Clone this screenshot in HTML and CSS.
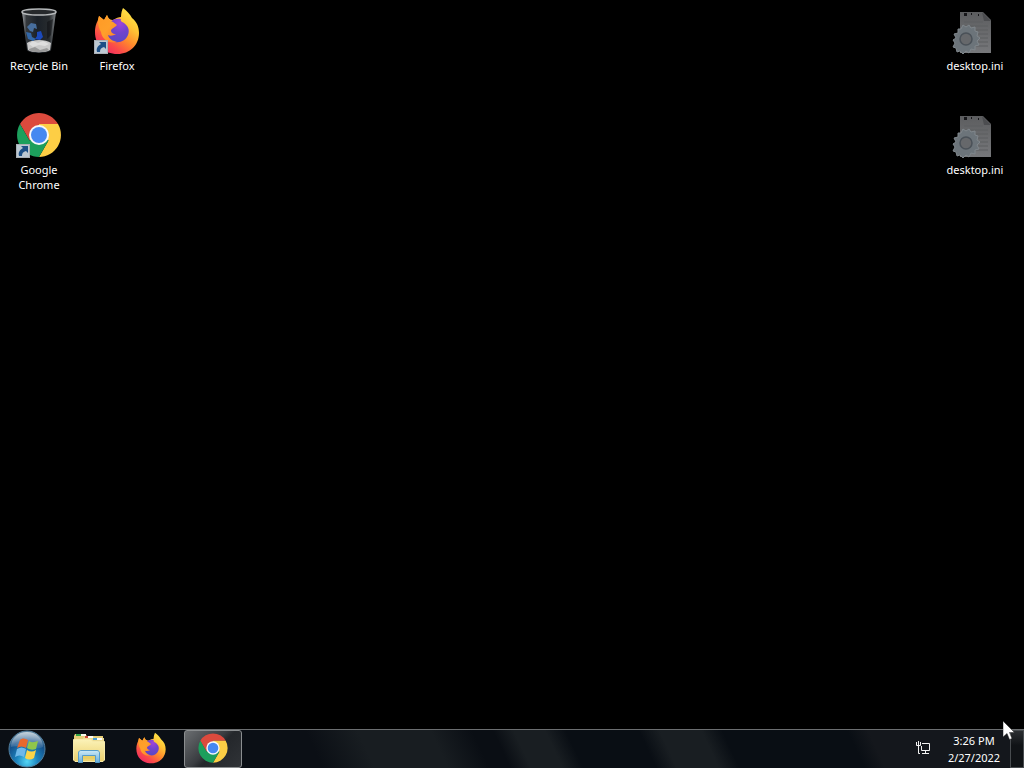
FILE: index.html
```
<!DOCTYPE html>
<html lang="en">
<head>
<meta charset="utf-8">
<title>Desktop</title>
<link rel="stylesheet" href="styles.css">
</head>
<body>
<svg class="defs" aria-hidden="true">
  <defs>
    <linearGradient id="fx-body" x1="0.85" y1="0.05" x2="0.2" y2="0.95">
      <stop offset="0" stop-color="#ffe94a"/><stop offset=".3" stop-color="#ffc234"/><stop offset=".55" stop-color="#ff8a2c"/><stop offset=".8" stop-color="#fb4a4a"/><stop offset="1" stop-color="#f02a62"/>
    </linearGradient>
    <linearGradient id="fx-head" x1="0" y1="0" x2="1" y2="1">
      <stop offset="0" stop-color="#ff9a26"/><stop offset=".5" stop-color="#ffa02a"/><stop offset="1" stop-color="#ff7a2e"/>
    </linearGradient>
    <radialGradient id="fx-globe" cx=".6" cy=".2" r=".8">
      <stop offset="0" stop-color="#a044d8"/><stop offset=".5" stop-color="#7043cc"/><stop offset="1" stop-color="#5a48c4"/>
    </radialGradient>
    <linearGradient id="bin-glass" x1="0" x2="1" y1="0" y2="0">
      <stop offset="0" stop-color="#a4a8ac"/><stop offset=".13" stop-color="#34383c"/><stop offset=".45" stop-color="#1b2128"/><stop offset=".8" stop-color="#272b2e"/><stop offset="1" stop-color="#85898c"/>
    </linearGradient>
    <radialGradient id="orb" cx=".5" cy=".85" r=".85">
      <stop offset="0" stop-color="#54d6f5"/><stop offset=".35" stop-color="#1c83bd"/><stop offset=".7" stop-color="#14508a"/><stop offset="1" stop-color="#63879e"/>
    </radialGradient>
    <linearGradient id="orb-shine" x1="0" y1="0" x2="0" y2="1">
      <stop offset="0" stop-color="#fff" stop-opacity=".65"/><stop offset="1" stop-color="#fff" stop-opacity=".08"/>
    </linearGradient>
    <linearGradient id="folder" x1="0" y1="0" x2="0" y2="1">
      <stop offset="0" stop-color="#fbf2b8"/><stop offset="1" stop-color="#ecd06c"/>
    </linearGradient>
    <linearGradient id="stand" x1="0" y1="0" x2="0" y2="1">
      <stop offset="0" stop-color="#cdeaf6"/><stop offset="1" stop-color="#67aedc"/>
    </linearGradient>
    <linearGradient id="page" x1="0" y1="0" x2="0" y2="1">
      <stop offset="0" stop-color="#5c5d5f"/><stop offset="1" stop-color="#77787b"/>
    </linearGradient>

    <symbol id="firefox" viewBox="0 0 48 48">
      <path fill="url(#fx-body)" d="M30 1C34 4 37 7 39 11C44 15 46 20 46 26C46 38 37 47 24.500 47C11 47 2 38 2 25C2 19 4 15 5 13L6 9L11 13L14 8C15 11 17 13 20 13C23 11 26 10 28 10C28 6 29 3 30 1Z"/>
      <path fill="url(#fx-globe)" d="M17 15C20 12 24 11 28 12C27 14 29 15 31 16C35 19 37 23 35 28C33 33 28 36 22 35C16 34 13 29 14 23C14 19 15 17 17 15Z"/>
      <path fill="url(#fx-head)" d="M5 13L6 9L11 13L14 8C15 12 17 14 20 15L24 18C23 20 19 21 18 23C18 25 19 27 23 27C20 29 17 29 15 28C16 32 20 34 24 35C16 37 9 32 8 25C6 22 5 18 5 13Z"/>
    </symbol>

    <symbol id="chrome" viewBox="0 0 48 48">
      <path fill="#dc4a3d" d="M5 13A22 22 0 0 1 43 13H24V24L14.500 29.500Z"/>
      <path fill="#fdce45" d="M43 13A22 22 0 0 1 24 46L33.500 29.500L24 24V13Z"/>
      <path fill="#1c9f5c" d="M5 13A22 22 0 0 0 24 46L33.500 29.500L24 24L14.500 29.500Z"/>
      <circle cx="24" cy="24" r="10" fill="#f6f8fa"/>
      <circle cx="24" cy="24" r="8" fill="#4688f1"/>
    </symbol>

    <symbol id="shortcut" viewBox="0 0 14 14">
      <rect width="14" height="14" fill="#bcc8d2"/>
      <rect x=".5" y=".5" width="13" height="13" fill="none" stroke="#a9afb5"/>
      <path fill="#1c4f86" d="M5 2H12V9L10 7C7 8 6 9 6 12H3C2 8 4 6 7 4Z"/>
    </symbol>

    <symbol id="recycle" viewBox="0 0 48 48">
      <path fill="url(#bin-glass)" d="M7 5L12 43C14 47 34 47 36 43L41 5Z"/>
      <path fill="#c9c9c9" d="M12 36C17 32 31 32 36 36L35 43C31 46 17 46 13 43Z"/>
      <path fill="#dedede" d="M14 37L18 34L23 36L28 34L34 37L30 39L24 38L18 40Z"/>
      <path fill="#999" d="M14 42L20 40L25 43L32 41L34 43C29 46 18 46 14 43Z"/>
      <path fill="#476e9d" d="M12 20L16 16L21 17L22 22L19 21L18 25L15 24Z"/>
      <path fill="#3267a8" d="M11 25L16 26L17 30L21 32L18 34L13 32Z"/>
      <path fill="#1b49bb" d="M22 25L26 24L28 30L25 33L20 32L22 29Z"/>
      <path fill="#101316" d="M32 15L38 12L36 28L32 32Z" opacity=".6"/>
      <ellipse cx="24" cy="5" rx="17" ry="3" fill="#26292c" stroke="#b5b8ba" stroke-width="1.500"/>
    </symbol>

    <symbol id="ini" viewBox="0 0 48 48">
      <path fill="url(#page)" d="M9 5H32L40 13V46H9Z"/>
      <path fill="#4c4d50" d="M31 5L33 14H40Z"/>
      <path stroke="#5d5e61" fill="none" d="M13 15H32M13 19H37M13 23H37M13 27H37M13 31H37M13 35H37M13 39H37"/>
      <path fill="#17171a" d="M13 6h3v3h-3zM20 6h1v2h-1zM27 7h1v2h-1z"/>
      <path fill="#6c747a" stroke="#80878c" d="M12 18L15 20L18 18L20 21L24 20L24 24L27 25L26 29L29 31L26 34L28 38L24 39L24 43L20 42L18 46L15 44L12 47L9 44L6 45L5 41L2 40L4 36L2 33L5 31L3 27L7 26L7 22L10 22Z"/>
      <circle cx="15" cy="32" r="6" fill="#66686b" stroke="#4a5158" stroke-width="1.500"/>
    </symbol>
  </defs>
</svg>

<div class="screen">
  <main class="desktop">
    <div class="icons">
      <button class="item" type="button"><svg class="pic"><use href="#recycle"/></svg><span>Recycle Bin</span></button>
      <button class="item" type="button"><svg class="pic"><use href="#chrome"/><use href="#shortcut" x="1" y="33" width="14" height="14"/></svg><span>Google Chrome</span></button>
      <button class="item" type="button"><svg class="pic"><use href="#firefox"/><use href="#shortcut" x="1" y="33" width="14" height="14"/></svg><span>Firefox</span></button>
    </div>
    <div class="icons">
      <button class="item" type="button"><svg class="pic"><use href="#ini"/></svg><span>desktop.ini</span></button>
      <button class="item" type="button"><svg class="pic"><use href="#ini"/></svg><span>desktop.ini</span></button>
    </div>
  </main>

  <footer class="taskbar">
    <button class="start" type="button" aria-label="Start">
      <svg class="orb" viewBox="0 0 38 38">
        <circle cx="19" cy="19" r="18" fill="url(#orb)" stroke="#527f9e"/>
        <path fill="url(#orb-shine)" d="M3 17C3 8 10 2 19 2S35 8 35 17C28 21 12 14 3 17Z"/>
        <path fill="#e9682d" d="M12 10C14 8 17 8 20 10L18 18C15 16 12 16 9 18Z"/>
        <path fill="#8fc64b" d="M21 11C24 13 27 12 30 11L28 19C25 20 22 20 19 18Z"/>
        <path fill="#6eb8e9" d="M9 19C12 17 15 17 18 19L16 27C13 25 10 25 7 27Z"/>
        <path fill="#fbd448" d="M19 20C22 22 25 22 28 20L26 28C23 30 20 30 17 28Z"/>
      </svg>
    </button>
    <nav class="tasks" aria-label="Applications">
      <button class="task" type="button" aria-label="File Explorer">
        <svg class="task-pic" viewBox="0 0 32 32">
          <path fill="#e6ce78" d="M1 4L2 2H12L14 4H30V25H1Z"/>
          <path fill="#30a046" d="M3 2h5v2H3z"/><path fill="#f8f8ed" d="M8 2h5v2H8z"/>
          <path fill="#eddc93" d="M10 6L12 4H20L22 6H31V26H10Z"/>
          <path fill="#cf4939" d="M12 4h3v2h-3z"/><path fill="#fff" d="M15 4h5v2h-5z"/>
          <path fill="#4b9ed5" d="M20 6h4v2h-4z"/><path fill="#fff" d="M24 6h5v2h-5z"/>
          <path fill="url(#folder)" stroke="#f7eaaa" d="M.5 7.500H18L20 9.500H31.500V28L30 29.500H2L.5 28Z"/>
          <path fill="url(#stand)" stroke="#579dca" d="M5.500 21C5.500 19 7 18.500 8 18.500H24C26 18.500 26.500 20 26.500 21V30.500H22.500V23.500H9.500V30.500H5.500Z"/>
          <path fill="#e9cf65" d="M10 24H22V27H10Z"/>
        </svg>
      </button>
      <button class="task" type="button" aria-label="Firefox"><svg class="task-pic"><use href="#firefox"/></svg></button>
      <button class="task task-active" type="button" aria-label="Google Chrome"><svg class="task-pic"><use href="#chrome"/></svg></button>
    </nav>
    <div class="tray">
      <button class="network" type="button" aria-label="Network">
        <svg class="network-pic" viewBox="0 0 16 16">
          <path fill="none" stroke="#f2f2f2" d="M7 3.500H14.500V10.500H6.500V6M10.500 11V13.500M7 13.500H14M1.500 2V5.500H5.500V2M3.500 1V13.500H5"/>
        </svg>
      </button>
      <button class="clock" type="button"><time>3:26 PM</time><time datetime="2022-02-27">2/27/2022</time></button>
      <button class="show-desktop" type="button" aria-label="Show desktop"></button>
    </div>
  </footer>

  <svg class="cursor" viewBox="0 0 12 19" aria-hidden="true"><path fill="#fff" stroke="#222" stroke-width=".5" d="M0 0V16L4 12.500L6.500 18.500L9 17.500L6.500 11.500H11.500Z"/></svg>
</div>
</body>
</html>
```
FILE: styles.css
```
* { box-sizing: border-box; }

body {
  margin: 0;
  background: #000;
  color: #fff;
  font: 11px/15px "Noto Sans", "Open Sans", sans-serif;
}

button {
  margin: 0;
  padding: 0;
  border: 0;
  background: none;
  color: inherit;
  font: inherit;
}

svg { display: block; }

.defs {
  position: absolute;
  width: 0;
  height: 0;
}

.screen {
  position: relative;
  display: flex;
  flex-direction: column;
  min-height: 100vh;
  overflow: hidden;
}

.desktop {
  flex: 1;
  display: flex;
  justify-content: space-between;
  align-items: flex-start;
  padding-right: 10px;
}

.icons {
  display: grid;
  grid-template-rows: repeat(2, 104px);
  grid-auto-flow: column;
  grid-auto-columns: 78px;
}

.item {
  display: flex;
  flex-direction: column;
  align-items: center;
  gap: 3px;
  padding: 7px 8px 0;
  text-shadow: 0 1px 2px #000;
}

.item span { margin: 0 -4px; }

.pic {
  width: 48px;
  height: 48px;
}

.taskbar {
  display: flex;
  gap: 6px;
  height: 39px;
  border-top: 1px solid #6b6e70;
  background: linear-gradient(65deg, #0b0f15 0 31%, #181d21 36% 43%, #0a0e14 47% 49%, #191e22 51% 54%, #090e14 56% 63%, #191e22 65% 69%, #090e14 71% 83%, #14171c 85%);
}

.start {
  display: flex;
  justify-content: center;
  width: 54px;
}

.orb {
  width: 38px;
  height: 38px;
}

.tasks {
  display: flex;
  gap: 4px;
}

.task {
  display: flex;
  align-items: center;
  justify-content: center;
  width: 58px;
  padding-bottom: 2px;
}

.task-pic {
  width: 32px;
  height: 32px;
}

.task-active {
  border: 1px solid #8b8e90;
  border-radius: 3px;
  background: linear-gradient(135deg, #6b6e71, #393c40 45%, #24272b 55%, #303337);
}

.tray {
  display: flex;
  align-items: stretch;
  margin-left: auto;
}

.network {
  display: flex;
  align-items: center;
  padding: 0 14px 2px;
}

.network-pic {
  width: 16px;
  height: 16px;
}

.clock {
  display: flex;
  flex-direction: column;
  align-items: center;
  justify-content: center;
  gap: 2px;
  width: 58px;
  margin-right: 7px;
}

.show-desktop {
  width: 14px;
  border: 1px solid #484c4f;
  background: linear-gradient(#2b2e31, #101316 40%);
}

.cursor {
  position: absolute;
  right: 9px;
  bottom: 28px;
  width: 12px;
  height: 19px;
}
```
